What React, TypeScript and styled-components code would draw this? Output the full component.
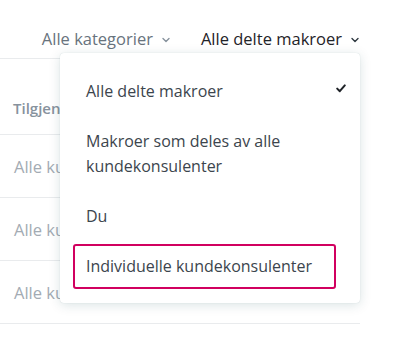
import React from "react";
import styled, { createGlobalStyle } from "styled-components";

const GlobalStyle = createGlobalStyle`
  html, body {
    margin: 0;
    padding: 0;
    background: #fff;
  }
  body {
    font-family: "Segoe UI", "Open Sans", "Noto Sans", sans-serif;
    -webkit-font-smoothing: antialiased;
  }
`;

const menuItems = [
  "Alle delte makroer",
  "Makroer som deles av alle kundekonsulenter",
  "Du",
  "Individuelle kundekonsulenter",
];

const Chevron = () => (
  <svg width="10" height="10" viewBox="0 0 10 10" fill="none">
    <path
      d="M2 3.5 L5 6.5 L8 3.5"
      stroke="currentColor"
      strokeWidth="1.4"
      strokeLinecap="round"
      strokeLinejoin="round"
    />
  </svg>
);

const Check = () => (
  <svg width="10" height="9" viewBox="0 0 10 9" fill="none">
    <path
      d="M1.2 4.6 L3.8 7.2 L8.8 1.4"
      stroke="#1f2328"
      strokeWidth="2"
      strokeLinecap="round"
      strokeLinejoin="round"
    />
  </svg>
);

const App: React.FC = () => {
  return (
    <Page>
      <GlobalStyle />
      <FilterBar>
        <FilterButton $active={false}>
          Alle kategorier
          <Chevron />
        </FilterButton>
        <FilterButton $active>
          Alle delte makroer
          <Chevron />
        </FilterButton>
      </FilterBar>

      <Table>
        <HeaderRow>
          <HeaderCell>Tilgjengelig for</HeaderCell>
        </HeaderRow>
        <Row>
          <Cell>Alle kundekonsulenter</Cell>
        </Row>
        <Row>
          <Cell>Alle kundekonsulenter</Cell>
        </Row>
        <Row>
          <Cell>Alle kundekonsulenter</Cell>
        </Row>
      </Table>

      <Menu>
        <CheckMark>
          <Check />
        </CheckMark>
        {menuItems.map((label, i) => (
          <MenuItem key={label} $focused={i === 3}>
            {label}
          </MenuItem>
        ))}
      </Menu>
    </Page>
  );
};

export default App;

const Page = styled.div`
  position: relative;
  width: 398px;
  height: 340px;
  overflow: hidden;
`;

const FilterBar = styled.div`
  display: flex;
  justify-content: flex-end;
  align-items: flex-end;
  gap: 30px;
  height: 58px;
  width: 360px;
  padding-bottom: 8px;
  box-sizing: border-box;
`;

const FilterButton = styled.div<{ $active: boolean }>`
  display: flex;
  align-items: center;
  gap: 8px;
  font-size: 16.5px;
  line-height: 22px;
  color: ${(p) => (p.$active ? "#1f2328" : "#68737d")};
  svg {
    color: ${(p) => (p.$active ? "#2f3941" : "#87929d")};
    margin-top: 2px;
  }
`;

const Table = styled.div`
  width: 360px;
  border-top: 1px solid #e9ebed;
`;

const HeaderRow = styled.div`
  display: flex;
  align-items: flex-end;
  height: 76px;
  padding-left: 13px;
  padding-bottom: 16px;
  box-sizing: border-box;
  border-bottom: 1px solid #e9ebed;
`;

const HeaderCell = styled.div`
  font-size: 15px;
  line-height: 20px;
  font-weight: 600;
  color: #87929d;
  white-space: nowrap;
`;

const Row = styled.div`
  display: flex;
  align-items: center;
  height: 62px;
  padding-left: 14px;
  border-bottom: 1px solid #e9ebed;
`;

const Cell = styled.div`
  font-size: 16.5px;
  color: #a3abb3;
  white-space: nowrap;
`;

const Menu = styled.div`
  position: absolute;
  left: 60px;
  top: 53px;
  width: 300px;
  box-sizing: border-box;
  padding: 16px 24px 14px 13px;
  display: flex;
  flex-direction: column;
  gap: 5px;
  background: #fff;
  border-radius: 4px;
  box-shadow: 0 2px 12px rgba(4, 68, 77, 0.15), 0 0 1px rgba(4, 68, 77, 0.2);
`;

const CheckMark = styled.div`
  position: absolute;
  right: 14px;
  top: 31px;
  display: flex;
`;

const MenuItem = styled.div<{ $focused: boolean }>`
  padding: 8px 11px;
  font-size: 16px;
  line-height: 25px;
  color: #3c454d;
  border: 2px solid ${(p) => (p.$focused ? "#d1005f" : "transparent")};
  border-radius: 3px;
`;
